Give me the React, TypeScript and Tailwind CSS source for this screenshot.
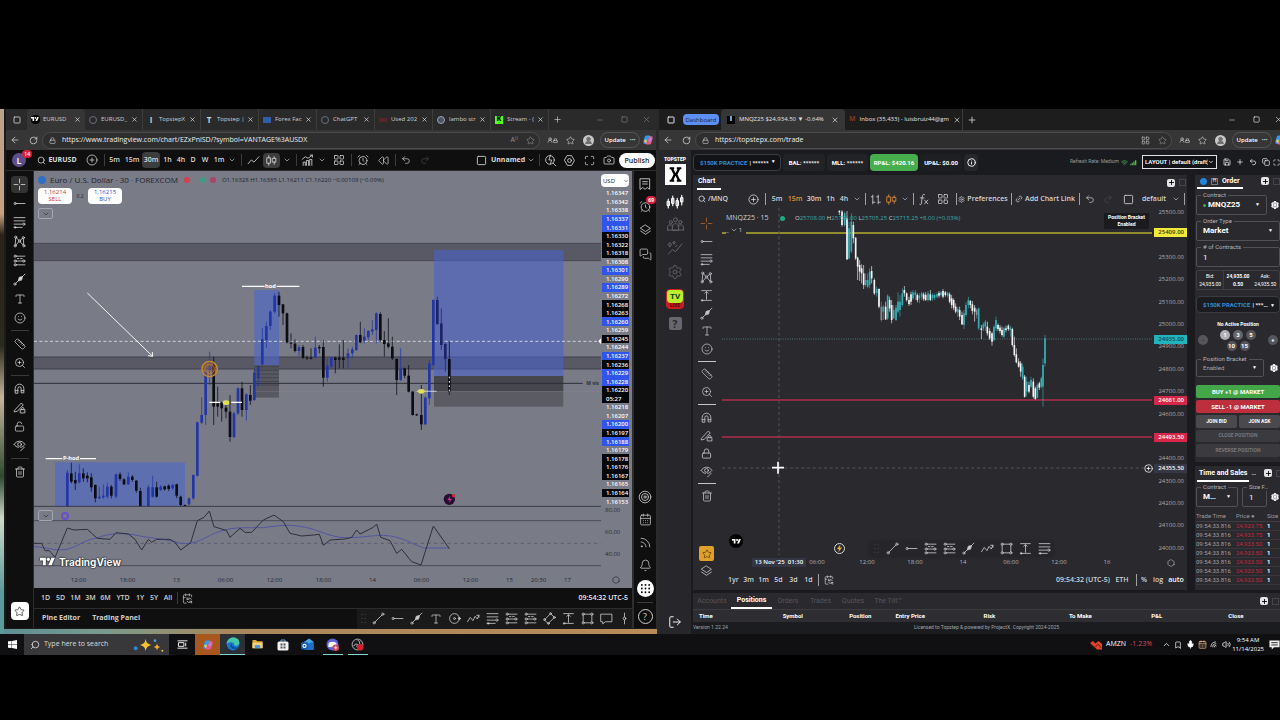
import React from "react";
import {
  AlarmClock, ArrowLeft, Bell, CalendarDays, Camera, ChevronDown, ChevronUp, CirclePlus, Copy, Hexagon,
  Link2, LogOut, Maximize, MessagesSquare, Mic, Minus, Plus, Redo2, Rewind, RotateCw,
  Rss, Ruler, Save, Search, Settings, SignalHigh, Smile, Square, Star, Target, Trash2, Type, Undo2,
  Volume2, Wifi, X, ZoomIn, Lock, LockOpen, Info, CalendarSync, Bookmark, Magnet, UserRound,
} from "lucide-react";

type Candle = [number, number, number, number, number, string];

/* x, high, top, bottom, low, colour key */
const EUR_A: Candle[] = [
  [202, 735, 743, 845, 845, "b"], [214, 713, 745, 770, 775, "k"], [226, 740, 765, 775, 795, "k"], [238, 718, 745, 772, 775, "b"],
  [250, 730, 745, 760, 770, "k"], [262, 742, 752, 760, 772, "k"], [274, 745, 757, 787, 800, "k"], [286, 778, 780, 820, 832, "k"],
  [298, 785, 815, 820, 822, "b"], [310, 778, 812, 817, 822, "b"], [322, 773, 785, 815, 820, "b"], [334, 780, 785, 812, 820, "k"],
  [348, 745, 748, 815, 820, "b"], [360, 742, 748, 762, 768, "k"], [372, 760, 763, 778, 780, "k"], [385, 742, 755, 778, 780, "b"],
  [397, 750, 755, 765, 770, "k"], [409, 765, 767, 797, 803, "k"], [421, 788, 798, 845, 845, "k"], [445, 780, 787, 845, 845, "b"],
  [458, 752, 787, 815, 818, "b"], [470, 770, 787, 815, 818, "k"], [482, 780, 785, 795, 798, "b"], [494, 782, 784, 793, 797, "k"],
  [506, 778, 782, 792, 798, "k"], [518, 776, 780, 790, 795, "b"], [530, 776, 778, 812, 820, "k"], [542, 812, 815, 840, 845, "k"],
  [555, 838, 840, 843, 845, "k"], [567, 818, 820, 838, 842, "b"], [580, 748, 750, 820, 825, "b"], [592, 590, 592, 752, 755, "b"],
  [605, 517, 570, 593, 597, "b"], [617, 430, 440, 570, 600, "b"], [629, 380, 425, 435, 480, "b"], [641, 395, 420, 545, 600, "k"],
  [653, 485, 535, 545, 575, "k"], [665, 530, 533, 550, 590, "k"], [678, 530, 548, 560, 580, "k"], [690, 510, 560, 636, 650, "k"],
  [702, 560, 565, 636, 640, "b"], [714, 487, 490, 565, 570, "b"], [726, 470, 490, 555, 575, "k"], [739, 505, 508, 555, 587, "b"],
  [751, 480, 510, 527, 540, "k"], [763, 430, 443, 525, 528, "b"], [775, 422, 424, 460, 485, "b"], [787, 310, 343, 418, 420, "b"],
  [799, 290, 303, 345, 368, "b"], [811, 255, 260, 303, 315, "b"], [824, 205, 212, 260, 265, "b"], [837, 200, 212, 240, 275, "k"],
  [849, 237, 238, 265, 300, "k"], [861, 263, 265, 352, 355, "k"], [873, 325, 353, 356, 370, "k"], [885, 343, 356, 378, 382, "k"],
  [897, 360, 367, 378, 392, "b"], [909, 360, 366, 398, 402, "k"], [921, 392, 397, 400, 405, "k"], [933, 370, 398, 401, 403, "k"],
  [946, 335, 368, 398, 400, "b"], [958, 360, 366, 370, 385, "k"], [970, 345, 366, 458, 485, "k"], [982, 400, 422, 458, 470, "b"],
  [994, 395, 397, 425, 430, "b"], [1006, 395, 398, 405, 445, "k"], [1018, 358, 398, 404, 430, "k"], [1030, 345, 398, 405, 430, "k"],
  [1044, 370, 385, 400, 430, "b"], [1057, 365, 373, 385, 400, "b"], [1069, 328, 330, 375, 378, "b"], [1081, 290, 330, 352, 355, "k"],
  [1093, 310, 335, 347, 355, "b"], [1105, 315, 318, 337, 345, "b"], [1117, 285, 313, 320, 330, "b"], [1129, 262, 265, 315, 355, "b"],
  [1141, 262, 267, 345, 350, "k"], [1153, 318, 345, 357, 395, "k"], [1165, 280, 355, 365, 370, "k"], [1177, 335, 365, 400, 405, "k"],
  [1190, 400, 402, 465, 510, "k"], [1202, 370, 430, 465, 468, "b"], [1214, 428, 430, 452, 460, "k"], [1226, 420, 452, 500, 502, "k"],
  [1238, 498, 500, 570, 572, "k"], [1250, 566, 568, 571, 573, "k"], [1264, 480, 570, 598, 615, "k"], [1276, 515, 518, 598, 600, "b"],
  [1288, 405, 415, 520, 540, "b"], [1300, 223, 225, 420, 425, "b"], [1312, 215, 225, 297, 300, "n"], [1324, 250, 295, 360, 375, "n"],
  [1336, 352, 357, 402, 440, "n"], [1348, 350, 402, 500, 510, "k"],
];

const NQ: Candle[] = [
  [58, 15, 18, 22, 30, "w"], [66, 15, 20, 60, 65, "w"], [74, 20, 25, 60, 65, "t"], [81, 18, 40, 163, 165, "w"], [87, 50, 70, 160, 163, "t"],
  [94, 25, 50, 140, 145, "t"], [100, 50, 60, 100, 115, "w"], [107, 97, 98, 160, 165, "w"], [113, 155, 158, 185, 225, "w"],
  [119, 165, 180, 200, 228, "w"], [125, 178, 190, 205, 235, "w"], [131, 180, 205, 240, 252, "w"], [137, 205, 225, 240, 245, "t"],
  [143, 205, 225, 245, 250, "t"], [149, 190, 200, 240, 250, "t"], [155, 183, 198, 220, 235, "w"], [163, 220, 225, 265, 270, "w"],
  [170, 245, 252, 265, 275, "t"], [177, 250, 252, 305, 310, "w"], [184, 290, 305, 345, 350, "g"], [190, 300, 305, 320, 345, "t"],
  [197, 290, 305, 343, 345, "w"], [203, 268, 272, 340, 345, "t"], [209, 275, 285, 310, 320, "w"], [215, 285, 300, 345, 355, "w"],
  [221, 300, 315, 340, 342, "t"], [228, 300, 308, 345, 348, "t"], [234, 262, 290, 320, 325, "t"], [240, 270, 290, 315, 335, "t"],
  [247, 250, 265, 300, 305, "t"], [253, 243, 255, 265, 275, "w"], [260, 262, 265, 285, 290, "w"], [267, 275, 285, 297, 303, "w"],
  [273, 260, 268, 290, 300, "w"], [279, 255, 262, 280, 285, "t"], [286, 255, 262, 270, 285, "t"], [292, 265, 270, 285, 292, "w"],
  [298, 265, 272, 280, 295, "t"], [305, 260, 265, 275, 285, "t"], [311, 262, 268, 282, 288, "w"], [317, 262, 270, 285, 288, "w"],
  [324, 258, 265, 285, 290, "t"], [331, 255, 268, 285, 288, "w"], [338, 265, 270, 280, 288, "t"], [344, 265, 270, 278, 285, "t"],
  [351, 262, 268, 275, 280, "t"], [357, 258, 264, 272, 278, "w"], [363, 258, 262, 270, 275, "t"], [369, 252, 258, 275, 280, "w"],
  [376, 258, 262, 270, 275, "w"], [383, 260, 264, 272, 278, "t"], [389, 262, 268, 290, 295, "w"], [395, 270, 280, 300, 310, "w"],
  [401, 280, 285, 308, 315, "w"], [407, 295, 305, 320, 325, "w"], [413, 305, 312, 322, 335, "t"], [419, 305, 315, 335, 345, "w"],
  [426, 320, 330, 358, 360, "w"], [432, 315, 325, 360, 372, "t"], [438, 292, 300, 330, 335, "t"], [445, 275, 285, 300, 310, "t"],
  [451, 285, 288, 300, 310, "w"], [457, 288, 298, 318, 328, "w"], [464, 300, 308, 320, 350, "w"], [470, 310, 315, 330, 340, "g"],
  [476, 308, 310, 370, 375, "t"], [484, 360, 370, 375, 402, "w"], [490, 352, 358, 370, 378, "t"], [496, 345, 350, 365, 378, "t"],
  [502, 350, 365, 385, 392, "w"], [509, 370, 378, 400, 405, "w"], [516, 380, 385, 410, 422, "w"], [522, 360, 365, 405, 410, "t"],
  [528, 335, 345, 370, 378, "t"], [534, 355, 360, 372, 378, "w"], [540, 360, 368, 378, 385, "w"], [546, 365, 375, 390, 395, "w"],
  [552, 365, 370, 395, 400, "t"], [558, 362, 370, 375, 382, "w"], [565, 358, 362, 372, 378, "w"], [571, 362, 368, 375, 395, "t"],
  [577, 368, 372, 420, 425, "w"], [583, 395, 420, 450, 455, "w"], [589, 430, 448, 472, 475, "w"], [596, 460, 470, 485, 488, "w"],
  [602, 468, 475, 500, 515, "w"], [608, 475, 485, 520, 525, "t"], [614, 510, 515, 575, 578, "w"], [620, 515, 530, 560, 575, "t"],
  [627, 530, 540, 560, 565, "w"], [633, 515, 525, 545, 550, "t"], [640, 520, 530, 575, 580, "w"], [646, 545, 550, 582, 584, "w"],
  [652, 535, 540, 578, 580, "t"], [658, 530, 535, 548, 555, "w"], [664, 515, 520, 545, 550, "t"], [669, 460, 480, 545, 605, "t"],
  [675, 390, 400, 475, 485, "t"],
];

const COLORS: Record<string, string> = { b: "#2336a6", k: "#0b0c14", n: "#1d2466", w: "#f1f3f4", t: "#35aeb5", g: "#8d8d90" };

function Candles({ data, w, wick }: { data: Candle[]; w: number; wick: number }) {
  return (
    <>
      {data.map(([x, hi, top, bot, lo, c]) => (
        <g key={x} fill={COLORS[c]}>
          <rect x={x - wick / 2} y={hi} width={wick} height={lo - hi} opacity="0.75" />
          <rect x={x - w / 2} y={top} width={w} height={Math.max(bot - top, 2)} />
        </g>
      ))}
    </>
  );
}

/* ---------- glyphs ---------- */
type GP = { s?: string; w?: number; children: React.ReactNode };
function G({ s = "size-[13px]", w = 1.5, children }: GP) {
  return (
    <svg viewBox="0 0 24 24" className={`${s} shrink-0`} fill="none" stroke="currentColor" strokeWidth={w} strokeLinecap="round" strokeLinejoin="round" aria-hidden="true">
      {children}
    </svg>
  );
}
const Cross = () => <G><path d="M12 2v7M12 15v7M2 12h7M15 12h7" /></G>;
const Trend = () => <G><circle cx="4" cy="20" r="2" /><circle cx="20" cy="4" r="2" /><path d="M5.5 18.500L18.500 5.500" /></G>;
const HRay = () => <G><circle cx="4" cy="12" r="2" /><path d="M6 12h16" /></G>;
const Fib = () => <G><path d="M2 3h20M2 9h20M2 15h15M2 21h15" /><circle cx="20" cy="15" r="2" /><circle cx="4" cy="21" r="1.500" /></G>;
const Pattern = () => <G><circle cx="4" cy="20" r="2" /><circle cx="5" cy="4" r="2" /><circle cx="12" cy="11" r="2" /><circle cx="19" cy="5" r="2" /><circle cx="20" cy="20" r="2" /><path d="M4 18L5 6M6.500 5.500L10.500 9.500M13.500 9.500L17.500 6.500M19.200 7l.6 11M18.500 18.500L13.300 12.500M5.500 18.500l5.200-6" /></G>;
const Position = () => <G><circle cx="4" cy="4" r="2" /><circle cx="4" cy="13" r="2" /><circle cx="20" cy="13" r="2" /><circle cx="4" cy="20" r="2" /><path d="M6 4h16M6 13h12M6 20h16M8 8.500h3M14 8.500h3" /></G>;
const Brush = () => <G><circle cx="3.500" cy="20.500" r="2" /><path d="M5 19l6-6M17 7l5-5" /><path d="M10 14l1.500-6 6-1.500L16 12.500z" fill="currentColor" /></G>;
const Zig = () => <G><path d="M1 18l5-8 5 6 4-8 4 5 3-7M18 6h4v4" /></G>;
const TextRange = () => <G><path d="M3 3h18M3 21h18M12 5v14M9 8l3-3 3 3" /><circle cx="4" cy="21" r="1.500" /></G>;
const RectTool = () => <G><path d="M6 4h12M6 20h12M4 6v12M20 6v12" /><circle cx="4" cy="4" r="2" /><circle cx="20" cy="4" r="2" /><circle cx="4" cy="20" r="2" /><circle cx="20" cy="20" r="2" /></G>;
const Rotated = () => <G><path d="M3 14L14 3l7 7-11 11z" /><circle cx="14" cy="3" r="1.800" /><circle cx="3" cy="14" r="1.800" /><circle cx="10" cy="21" r="1.800" /><circle cx="21" cy="10" r="1.800" /></G>;
const CircleTool = () => <G><circle cx="12" cy="12" r="9" /><circle cx="12" cy="12" r="1.800" /><circle cx="21" cy="12" r="1.800" fill="currentColor" /></G>;
const Callout = () => <G><path d="M2 4h20v14H10l-5 4v-4H2z" /></G>;
const VLine = () => <G><path d="M12 2v7M12 15v7" /><circle cx="12" cy="12" r="2.500" /></G>;
const MagnetI = () => <G><path d="M4 20v-8a8 8 0 0116 0v8h-5v-8a3 3 0 00-6 0v8zM4 16h5M15 16h5" /></G>;
const PencilLock = () => <G><path d="M3 17L15 4l4 3L8 19l-5 1zM14 16h8v6h-8zM16 16v-2a2 2 0 014 0v2" /></G>;
const EyePen = () => <G><path d="M2 10c5-8 15-8 20 0-2 3-5 5-8 5.500M2 10c2 3 5 5 8 5.500" /><circle cx="12" cy="10" r="3.500" /><path d="M14 22l7-7" /></G>;
const CandlesI = () => <G><path d="M7 3v4M7 17v4M4 7h6v10H4zM17 5v3M17 15v4M14 8h6v7h-6z" /></G>;
const BarsI = () => <G><path d="M7 4v16M7 7H4M7 17h4M17 4v16M17 7h-3M17 17h4" /></G>;
const Indicators = () => <G><path d="M4 21v-6h4v6M10 21v-9h4v9M16 21V10h4v11M2 10l6-5 5 3 8-6M17 2h4v4" /></G>;
const GridI = ({ s = "size-3" }: { s?: string }) => <G s={s}><rect x="3" y="3" width="7" height="7" rx="1" /><rect x="14" y="3" width="7" height="7" rx="1" /><rect x="3" y="14" width="7" height="7" rx="1" /><rect x="14" y="14" width="7" height="7" rx="1" /></G>;
const Quick = () => <G><circle cx="11" cy="11" r="8" /><path d="M17 17l5 5M12 2l-3 9h5l-2 7" /></G>;
const HexI = () => <G><path d="M8 3h8l5 9-5 9H8l-5-9z" /><circle cx="12" cy="12" r="3.500" /></G>;
const LayersI = () => <G><path d="M12 2l9 6-9 6-9-6zM3 13l9 6 9-6" /></G>;
const People = () => <G s="size-[19px]" w={1.2}><circle cx="12" cy="6" r="2.500" /><circle cx="6" cy="9" r="2" /><circle cx="18" cy="9" r="2" /><path d="M2 19v-4c0-3 6-3.500 7-1M22 19v-4c0-3-6-3.500-7-1M8 19v-5c0-4 8-4 8 0v5zM2 19h20" /></G>;
const Sparks = () => <G s="size-[17px]" w={1.3}><path d="M2 21l6-6 4 3 9-11M12 11l2-2M4 11l1-2 2-1-2-1-1-2-1 2-2 1 2 1zM10 7l.700-1.500L12 5l-1.300-.6L10 3l-.7 1.400L8 5l1.300.5z" /></G>;
const Drag = () => (
  <G><path d="M9 5v.1M15 5v.1M9 12v.1M15 12v.1M9 19v.1M15 19v.1" /></G>
);
const MultiCandle = () => <G s="size-[18px]"><path d="M3 8v12M9 4v13M15 7v13M21 3v13" /><rect x="1.500" y="11" width="3" height="6" rx="1" /><rect x="7.500" y="7" width="3" height="7" rx="1" /><rect x="13.500" y="10" width="3" height="7" rx="1" /><rect x="19.500" y="6" width="3" height="6" rx="1" /></G>;
const TvMark = ({ s }: { s: string }) => (
  <svg viewBox="0 0 36 28" className={s} fill="currentColor" aria-hidden="true">
    <path d="M14 22H7V11H0V4h14zM28 22h-8l7.500-18h8z" /><circle cx="20" cy="8" r="4" />
  </svg>
);
const Copilot = () => (
  <svg viewBox="0 0 24 24" className="size-[12px] shrink-0" aria-hidden="true">
    <path d="M9 3h6c2 0 2.500 2 3 4l-4 1-5 12H7c-4 0-5-2-4-6l2-7c.7-2.500 1.500-4 4-4z" fill="#2f9be8" />
    <path d="M15 21H9c-2 0-2.500-2-3-4l4-1 5-12h2c4 0 5 2 4 6l-2 7c-.7 2.500-1.500 4-4 4z" fill="#e25b8b" />
    <path d="M14 8h5l1 2-3 5-4-1z" fill="#c77be8" /><path d="M4 12l5-1 1 5-4 2z" fill="#f1c24a" />
  </svg>
);
const EdgeI = () => (
  <svg viewBox="0 0 24 24" className="size-[14px]" aria-hidden="true">
    <circle cx="12" cy="12" r="11" fill="#1778d2" />
    <path d="M1 12C2 4 8 1 13 1c6 0 10 4 10 9 0 3-3 5-6 5-2 0-3-1-3-2 0-3-3-4-5-4-4 0-7 1-8 3z" fill="#46c8a8" />
    <path d="M9 10c-3 3-2 10 5 11 3 .5 6-1 8-4-4 2-13 1-13-7z" fill="#0d4f9a" />
  </svg>
);

type CellP = { w: string; children?: React.ReactNode; label?: string; className?: string };
function Btn({ w, children, label, className = "" }: CellP) {
  return (
    <button type="button" aria-label={label} className={`flex h-full shrink-0 items-center justify-center whitespace-nowrap ${w} ${className}`}>
      {children}
    </button>
  );
}
function Sep({ w, c = "bg-[#3c3c3c]" }: { w: string; c?: string }) {
  return <span className={`flex h-full shrink-0 items-center justify-center ${w}`}><span className={`h-3 w-px ${c}`} /></span>;
}
const Chev = () => <ChevronDown size={8} strokeWidth={1.8} />;

const lucide = { size: 12, strokeWidth: 1.5 };

/* ---------- left browser ---------- */
const LEFT_TABS = [
  { t: "EURUSD", i: <span className="flex size-[9px] items-center justify-center rounded-sm bg-black text-white"><TvMark s="w-2" /></span>, a: true },
  { t: "EURUSD_", i: <span className="size-2 rounded-full border border-gray-500" /> },
  { t: "TopstepX", i: <span className="text-[8px] font-bold">I</span> },
  { t: "Topstep |", i: <span className="text-[8px] font-bold">T</span> },
  { t: "Forex Fac", i: <span className="h-1.5 w-2 bg-[#2f5fa8]" /> },
  { t: "ChatGPT", i: <span className="size-2 rounded-full border border-gray-500" /> },
  { t: "Used 202", i: <span className="h-1 w-2 bg-[#5b2327]" /> },
  { t: "lambo str", i: <span className="size-2 rounded-full border border-gray-400 bg-gray-600" /> },
  { t: "Stream - (", i: <span className="flex size-2 items-center justify-center bg-[#53fc18] text-[7px] font-black text-black">K</span> },
];

function WindowControls() {
  return (
    <div className="flex h-full items-center">
      <Btn w="w-6" label="Minimize"><Minus size={8} strokeWidth={1.5} /></Btn>
      <Btn w="w-6" label="Maximize"><Square size={7} strokeWidth={2} /></Btn>
      <Btn w="w-5" label="Close window"><X size={9} strokeWidth={1.5} /></Btn>
    </div>
  );
}

function AddressBar({ url, extra }: { url: string; extra?: boolean }) {
  return (
    <div className={`flex h-5 shrink-0 items-center bg-[#363637] text-[#d6d6d6] ${extra ? "-mr-2" : ""}`}>
      <Btn w="w-[18px]" label="Back"><ArrowLeft size={10} strokeWidth={1.8} /></Btn>
      <Btn w="w-[18px]" label="Reload"><RotateCw size={9} strokeWidth={2} /></Btn>
      <label className="flex h-[17px] min-w-0 flex-1 items-center gap-1 rounded-full border border-[#4b4b4c] bg-[#2e2e2f] pr-1 pl-1.5">
        <Lock size={7} strokeWidth={2} />
        <input aria-label="Address" className="ml-0.5 min-w-0 flex-1 bg-transparent text-[7px] text-[#ececec] outline-none" defaultValue={url} />
        {extra ? <GridI s="size-[9px]" /> : <span className="text-[7px] text-[#8e8e8e]">A⁾⁾</span>}
        <Star size={9} strokeWidth={1.5} className="ml-1 text-[#9a9a9a]" />
      </label>
      <Btn w="w-6" label="Extensions"><span className="flex items-end"><UserRound size={6} strokeWidth={2.5} /><Lock size={5} strokeWidth={3} /></span></Btn>
      <Btn w="w-3" label="Favorites"><Star size={9} strokeWidth={1.6} /></Btn>
      <Btn w="w-6" label="Profile"><span className="flex size-[11px] items-center justify-center rounded-full bg-[#c9c9c9] text-[#6f6f6f]"><UserRound size={9} strokeWidth={2} fill="currentColor" /></span></Btn>
      <button type="button" className="flex h-4 w-10 shrink-0 items-center justify-center gap-1 rounded-full border border-[#555] text-[6px] font-semibold whitespace-nowrap text-white">Update <span className="text-[7px]">···</span></button>
      <Btn w="w-4" label="Copilot"><Copilot /></Btn>
    </div>
  );
}

function LeftTabs() {
  return (
    <div className="flex h-[21px] shrink-0 items-center overflow-hidden bg-[#2a2a2b] text-[6px] text-[#cfcfcf]">
      <Btn w="w-[21px]" label="Tab actions"><Square size={8} strokeWidth={2.5} /></Btn>
      {LEFT_TABS.map((t) => (
        <div key={t.t} className={`flex h-full w-[58px] shrink-0 items-center pr-1 pl-0.5 ${t.a ? "rounded-t bg-[#363637]" : "border-r border-[#3c3c3c]"}`}>
          <span className="flex w-[12px] shrink-0 justify-center">{t.i}</span>
          <span className="ml-0.5 flex-1 whitespace-nowrap">{t.t}</span>
          <button type="button" aria-label={`Close ${t.t}`} className="text-white"><X size={7} strokeWidth={2} /></button>
        </div>
      ))}
      <Btn w="w-4" label="New tab"><Plus size={9} strokeWidth={1.8} /></Btn>
      <div className="flex-1" />
      <div className="h-full text-[#8a8a8a]"><WindowControls /></div>
    </div>
  );
}

function LeftTopBar() {
  return (
    <div className="flex h-[21px] shrink-0 items-center border-b border-[#2d2d2d] bg-[#0f0f0f] text-[7px] font-semibold text-[#dadada]">
      <button type="button" aria-label="Account" className="relative flex h-full w-[26px] shrink-0 items-center justify-center">
        <span className="flex size-[14px] items-center justify-center rounded-full bg-[#5d4f8c] text-[9px] leading-none text-white">L</span>
        <span className="absolute top-0 right-0 rounded-full bg-[#d81f3c] px-0.5 text-[5px] leading-2 text-white">14</span>
      </button>
      <Btn w="w-[50px]" className="gap-0.5 font-bold"><Search size={9} strokeWidth={2} />EURUSD</Btn>
      <Btn w="w-5" label="Compare"><CirclePlus {...lucide} /></Btn>
      <Sep w="w-[5px]" />
      <Btn w="w-[15px]">5m</Btn>
      <Btn w="w-5">15m</Btn>
      <Btn w="w-[18px]"><span className="w-full rounded-sm bg-[#3d3d3d] py-1 leading-2">30m</span></Btn>
      <Btn w="w-[15px]">1h</Btn>
      <Btn w="w-3">4h</Btn>
      <Btn w="w-3">D</Btn>
      <Btn w="w-3">W</Btn>
      <Btn w="w-4">1m</Btn>
      <Btn w="w-2.5" label="Intervals"><Chev /></Btn>
      <Sep w="w-2" />
      <Btn w="w-4" label="Line"><G><path d="M2 18l6-7 5 4 9-10" /></G></Btn>
      <Btn w="w-5" label="Candles"><span className="rounded-sm bg-[#3d3d3d] px-0.5 py-px"><CandlesI /></span></Btn>
      <Btn w="w-3" label="Chart types"><Chev /></Btn>
      <Sep w="w-1.5" />
      <Btn w="w-4" label="Indicators"><Indicators /></Btn>
      <Btn w="w-3.5" label="More indicators"><Chev /></Btn>
      <Btn w="w-5" label="Templates"><GridI /></Btn>
      <Sep w="w-1" />
      <Btn w="w-5" label="Alert"><AlarmClock {...lucide} /></Btn>
      <Btn w="w-5" label="Replay"><Rewind size={11} strokeWidth={1.5} /></Btn>
      <Sep w="w-1" />
      <Btn w="w-[18px]" label="Undo"><Undo2 size={10} strokeWidth={1.6} /></Btn>
      <Btn w="w-5" label="Redo" className="text-[#4a4a4a]"><Redo2 size={10} strokeWidth={1.6} /></Btn>
      <div className="flex-1" />
      <Btn w="w-5" label="Layout"><Square size={11} strokeWidth={1.8} /></Btn>
      <Btn w="w-[34px]" className="font-bold">Unnamed</Btn>
      <Btn w="w-3" label="Layouts"><Chev /></Btn>
      <Sep w="w-1" />
      <Btn w="w-[18px]" label="Quick search"><Quick /></Btn>
      <Btn w="w-5" label="Settings"><HexI /></Btn>
      <Btn w="w-5" label="Full screen"><Maximize size={11} strokeWidth={1.6} /></Btn>
      <Btn w="w-5" label="Snapshot"><Camera {...lucide} /></Btn>
      <button type="button" className="mr-px h-[15px] w-[36px] shrink-0 rounded-full bg-white text-[7px] leading-none font-semibold text-[#1c1c1c]">Publish</button>
    </div>
  );
}

function ToolColumn({ items, item, sep, line }: { items: (React.ReactNode | null)[]; item: string; sep: string; line: string }) {
  return (
    <>
      {items.map((n, i) =>
        n === null ? (
          <span key={i} className={`flex w-full shrink-0 items-center justify-center ${sep}`}><span className={`h-px w-[18px] ${line}`} /></span>
        ) : (
          <button key={i} type="button" aria-label="Drawing tool" className={`flex w-full shrink-0 items-center justify-center ${item}`}>{n}</button>
        )
      )}
    </>
  );
}

const LABELS: [string, string][] = [
  ["1.16347", ""], ["1.16342", ""], ["1.16338", ""], ["1.16337", "b"], ["1.16331", "b"], ["1.16330", "k"], ["1.16322", "k"], ["1.16318", "k"],
  ["1.16308", ""], ["1.16301", "b"], ["1.16290", ""], ["1.16289", "b"], ["1.16272", ""], ["1.16268", "k"], ["1.16263", "k"], ["1.16260", "b"],
  ["1.16259", ""], ["1.16245", "k"], ["1.16244", ""], ["1.16237", "b"], ["1.16236", "k"], ["1.16229", "b"], ["1.16228", "b"], ["1.16220", "k"],
  ["05:27", "k"], ["1.16218", ""], ["1.16207", ""], ["1.16200", "b"], ["1.16197", "k"], ["1.16188", "b"], ["1.16179", ""], ["1.16178", "k"],
  ["1.16176", "k"], ["1.16167", "k"], ["1.16165", ""], ["1.16164", "k"], ["1.16153", ""],
];
const LABEL_BG: Record<string, string> = { "": "", b: "bg-[#2f55ea]", k: "bg-[#05060a]" };

function EurChart() {
  return (
    <div className="relative min-w-0 flex-1">
      <svg viewBox="0 0 1701 1203" preserveAspectRatio="none" className="block h-[401px] w-full" role="img" aria-label="EURUSD 30 minute chart">
        <g transform="translate(-102 162)">
          <rect x="102" y="55" width="1701" height="52" fill="#595965" />
          <path d="M102 55H1803M102 107H1803" stroke="#484854" strokeWidth="3" />
          <rect x="102" y="396" width="1701" height="36" fill="#595965" />
          <path d="M102 396H1803M102 432H1803" stroke="#40404c" strokeWidth="3" />
          <rect x="165" y="712" width="390" height="133" fill="#4e67c8" opacity="0.62" />
          <rect x="763" y="195" width="74" height="226" fill="#4e67c8" opacity="0.65" />
          <rect x="763" y="421" width="74" height="97" fill="#50505a" opacity="0.8" />
          <path d="M763 425h74M763 436h74M763 447h74M763 458h74M763 469h74M763 480h74" stroke="#3c3c46" strokeWidth="2" />
          <rect x="1302" y="75" width="388" height="378" fill="#4a62c8" opacity="0.6" />
          <rect x="1302" y="453" width="388" height="45" fill="#46464d" />
          <rect x="1302" y="498" width="388" height="47" fill="#5b5b64" />
          <path d="M102 475H1748" stroke="#2c2d38" strokeWidth="3" />
          <path d="M640 499H1803" stroke="#94868f" strokeWidth="2" opacity="0.5" />
          <path d="M102 349H1803" stroke="#cfcfd8" strokeWidth="3" strokeDasharray="9 7" />
          <Candles data={EUR_A} w={8} wick={3} />
          <path d="M1348 455V500" stroke="#fff" strokeWidth="3" strokeDasharray="5 8" />
          <path d="M262 204L458 394M444 392l14 2-1-13" stroke="#f4f4f6" strokeWidth="3" fill="none" />
          <g stroke="#fff" strokeWidth="4">
            <path d="M726 184h68M830 184h68M137 701h50M240 701h48M628 532h32M694 532h32" />
            <path d="M1250 499h60" opacity="0.5" />
          </g>
          <g fill="#fff" fontSize="17" fontWeight="700" textAnchor="middle">
            <text x="811" y="190">hod</text>
            <text x="213" y="706">P-hod</text>
            <text x="1778" y="481" fill="#30313c" fontSize="15">M vis</text>
          </g>
          <ellipse cx="678" cy="533" rx="10" ry="7" fill="#dede58" />
          <ellipse cx="1264" cy="499" rx="10" ry="7" fill="#dede58" />
          <circle cx="629" cy="432" r="23" fill="#b0643c" fillOpacity="0.4" stroke="#c98a2a" strokeWidth="4" />
          <circle cx="629" cy="432" r="14" fill="none" stroke="#c98a2a" strokeWidth="2" />
          <circle cx="1348" cy="823" r="17" fill="#2b0d33" />
          <path d="M1351 812l-9 13h7l-2 9 9-13h-7z" fill="#c03a8a" />
          <circle cx="1361" cy="812" r="5" fill="#d22a3c" />
          <path d="M1803 340l-8 9 8 9z" fill="#fff" />
        </g>
        <g transform="translate(-102 987)" fill="none">
          <path d="M102 19H1803" stroke="#3b3c49" strokeWidth="3" />
          <path d="M102 62H1803M102 197H1803" stroke="#4b4c58" strokeWidth="3" />
          <path d="M102 130H1803" stroke="#5c5d70" strokeWidth="3" strokeDasharray="10 10" />
          <path d="M102 140C140 142 160 152 195 149C230 144 250 120 290 114C330 98 380 98 420 108C460 116 500 116 540 130C590 138 620 106 660 94C700 80 740 84 790 83C830 78 860 72 900 79C950 86 970 104 1020 112C1070 116 1110 106 1150 106C1200 108 1230 128 1270 144H1348" stroke="#5257a0" strokeWidth="3" />
          <path d="M102 130L125 130 135 152 148 152 165 172 185 125 202 84 222 90 262 88 292 115 330 118 348 98 385 102 405 118 425 150 445 118 455 127 470 118 510 118 525 127 542 150 572 128 592 62 612 52 628 33 642 80 680 92 690 112 720 85 735 97 755 97 790 60 822 45 850 65 870 100 905 108 940 105 958 103 970 136 990 120 1035 117 1055 112 1070 90 1080 102 1120 82 1130 72 1142 112 1170 122 1190 160 1205 148 1235 185 1263 195 1300 78 1348 146" stroke="#2f303c" strokeWidth="3" />
        </g>
      </svg>
      <div className="absolute inset-x-0 top-0 px-1 pt-[3px] text-[#23252f]">
        <div className="flex h-3 items-center gap-1 whitespace-nowrap">
          <span className="size-2 rounded-sm bg-[#2f6fc4]" />
          <span className="text-[8px]">Euro / U.S. Dollar · 30 · FOREXCOM</span>
          <span className="ml-0.5 size-1.5 rounded-full bg-[#d4404c]" />
          <span className="ml-1.5 size-1.5 rounded-full bg-[#3f9c84]" />
          <span className="size-1.5 rounded-full bg-[#a8446a]" />
          <span className="ml-0.5 text-[6px]">O1.16328 H1.16385 L1.16211 C1.16220 −0.00109 (−0.09%)</span>
        </div>
        <div className="mt-0.5 flex items-center text-center text-[6px] leading-[7px]">
          <button type="button" className="w-[34px] rounded-sm bg-white py-px text-[#c8324a]">1.16214<br />SELL</button>
          <span className="w-4 text-[5px]">0.2</span>
          <button type="button" className="w-[34px] rounded-sm bg-white py-px text-[#2f4fd0]">1.16215<br />BUY</button>
        </div>
        <button type="button" aria-label="Collapse legend" className="mt-1 flex h-[11px] w-[15px] items-center justify-center rounded-xs border border-[#a5a7b0]"><Chev /></button>
      </div>
      <div className="absolute top-[339px] left-1 flex items-center gap-2">
        <button type="button" aria-label="Collapse pane" className="flex h-[11px] w-[15px] items-center justify-center rounded-xs border border-[#a5a7b0] text-[#23252f]"><Chev /></button>
        <span className="size-2 rounded-full border-2 border-[#6a50c8]" />
      </div>
      <div className="absolute top-[383px] left-[6px] flex items-center gap-1 text-white [text-shadow:0_0_2px_#000,0_0_1px_#000]">
        <TvMark s="w-[15px] drop-shadow-[0_0_1px_#000]" />
        <span className="[font-family:Inter,sans-serif] text-[10px] leading-4 font-bold">TradingView</span>
      </div>
    </div>
  );
}

function LeftWindow() {
  return (
    <section className="mb-[5px] flex min-w-0 flex-col border-r border-b border-l-2 border-[#1b1b1b] border-r-[#2a2a2a] bg-[#2d2d2d]">
      <LeftTabs />
      <AddressBar url="https://www.tradingview.com/chart/EZxPnlSD/?symbol=VANTAGE%3AUSDX" />
      <LeftTopBar />
      <div className="flex flex-1">
        <aside className="flex w-[27px] shrink-0 flex-col items-center bg-[#0f0f0f] pt-1 text-[#d6d6d6]">
          <ToolColumn
            item="h-[19px]" sep="h-[7px]" line="bg-[#3a3a3a]"
            items={[
              <span className="flex size-[17px] items-center justify-center rounded-sm bg-[#333]"><Cross /></span>, <HRay />, <Fib />, <Pattern />, <Position />, <Brush />, <Type {...lucide} />, <Smile {...lucide} />, null,
              <Ruler {...lucide} />, <ZoomIn {...lucide} />, null, <MagnetI />, <PencilLock />, <LockOpen size={11} strokeWidth={1.6} />, <EyePen />, null, <Trash2 {...lucide} />,
            ]}
          />
          <div className="flex-1" />
          <button type="button" aria-label="Favorites" className="mb-2 flex size-[18px] items-center justify-center rounded-sm bg-white text-[#222]"><Star size={11} strokeWidth={1.5} /></button>
        </aside>
        <div className="flex min-w-0 flex-1 flex-col pl-px">
          <div className="bg-[#797b87]">
            <div className="flex">
              <EurChart />
              <div className="flex w-[31px] shrink-0 flex-col pr-[3px] text-[6px] text-white">
                <div className="mt-[3px] flex h-[13px] items-center rounded-sm bg-white pl-0.5 text-[#222]">
                  <select aria-label="Currency" className="w-full appearance-none bg-transparent text-[6px] leading-none"><option>USD</option></select>
                  <ChevronDown size={6} strokeWidth={2} />
                </div>
                <div className="mt-[2px] flex h-[317px] flex-col pl-px">
                  {LABELS.map(([t, c]) => (
                    <span key={t} className={`flex flex-1 items-center pl-1 leading-none font-semibold ${LABEL_BG[c]}`}>{t}</span>
                  ))}
                </div>
                <div className="flex flex-1 flex-col justify-between pb-[14px] pl-1 text-[6px] leading-[8px] text-[#2b2d38]">
                  <span>80.00</span><span>60.00</span><span>40.00</span>
                </div>
              </div>
            </div>
            <div className="flex h-4 items-center pl-5 text-center text-[6px] text-[#262833]">
              {["12:00", "18:00", "13", "06:00", "12:00", "18:00", "14", "06:00", "12:00"].map((t, i) => (
                <span key={i} className="w-[49px] shrink-0">{t}</span>
              ))}
              {["15", "20:30", "17"].map((t) => <span key={t} className="w-[29px] shrink-0">{t}</span>)}
              <span className="flex flex-1 justify-end pr-3"><Hexagon size={8} strokeWidth={2} /></span>
            </div>
          </div>
          <div className="flex h-5 items-center bg-[#0f0f0f] pr-1 pl-1 text-[7px] font-semibold text-[#cfcfcf]">
            {["1D", "5D", "1M", "3M", "6M"].map((t) => <Btn key={t} w="w-[15px]">{t}</Btn>)}
            <Btn w="w-5">YTD</Btn>
            {["1Y", "5Y", "All"].map((t) => <Btn key={t} w="w-[14px]">{t}</Btn>)}
            <Sep w="w-1" />
            <Btn w="w-4" label="Go to date"><CalendarSync size={11} strokeWidth={1.5} /></Btn>
            <div className="flex-1" />
            <span className="text-[#ececec]">09:54:32 UTC-5</span>
          </div>
          <div className="mt-px flex h-[19px] items-center bg-[#0f0f0f] pl-2 text-[7px] font-bold text-[#d0d0d0]">
            <button type="button" className="mr-3">Pine Editor</button>
            <button type="button">Trading Panel</button>
            <div className="flex-1" />
            <div className="flex h-full items-center bg-[#1a1a1a] text-[#cacaca]">
              <Btn w="w-3" label="Move" className="text-[#666]"><Drag /></Btn>
              {[<Trend />, <HRay />, <Brush />, <Type {...lucide} />, <CircleTool />, <Zig />, <Fib />, <Position />, <Position />, <Rotated />, <TextRange />, <RectTool />, <Callout />].map((n, i) => (
                <Btn key={i} w="w-[19px]" label="Drawing tool">{n}</Btn>
              ))}
              <Btn w="w-4" label="Drawing tool"><VLine /></Btn>
            </div>
          </div>
        </div>
        <aside className="ml-0.5 flex w-[22px] shrink-0 flex-col items-center bg-[#0f0f0f] pt-0.5 text-[#d0d0d0]">
          <Btn w="w-full" label="Watchlist" className="max-h-[21px]"><G s="size-[14px]"><path d="M4 3h16v18l-4-3-4 3-4-3-4 3zM8 8h8M8 12h8" /></G></Btn>
          <button type="button" aria-label="Alerts" className="relative flex h-6 w-full shrink-0 items-center justify-center"><AlarmClock size={13} strokeWidth={1.5} /><span className="absolute top-0.5 right-0 rounded-full bg-[#d81f3c] px-0.5 text-[5px] leading-2 font-bold text-white">69</span></button>
          <Btn w="w-full" label="Object tree" className="max-h-6"><LayersI /></Btn>
          <Btn w="w-full" label="Chats" className="max-h-6"><MessagesSquare size={13} strokeWidth={1.4} /></Btn>
          <div className="flex-1" />
          {[<Target size={14} strokeWidth={1.4} />, <CalendarDays size={13} strokeWidth={1.4} />, <Rss size={13} strokeWidth={1.4} />, <Bell size={13} strokeWidth={1.4} />,
            <span className="flex size-[17px] items-center justify-center rounded-full bg-white text-black"><G s="size-[11px]" w={4}><path d="M4 4v.1M12 4v.1M20 4v.1M4 12v.1M12 12v.1M20 12v.1M4 20v.1M12 20v.1M20 20v.1" /></G></span>].map((n, i) => (
            <button key={i} type="button" aria-label="Panel" className="flex h-[23px] w-full shrink-0 items-center justify-center">{n}</button>
          ))}
          <span className="my-0.5 h-px w-4 shrink-0 bg-[#3a3a3a]" />
          <button type="button" aria-label="Help" className="my-1 flex size-[15px] shrink-0 items-center justify-center rounded-full border border-[#d0d0d0] text-[9px] leading-none">?</button>
        </aside>
      </div>
    </section>
  );
}

/* ---------- right browser ---------- */
const roboto = "[font-family:Roboto,sans-serif]";

function RightTabs() {
  return (
    <div className="flex h-[21px] shrink-0 items-center overflow-hidden bg-[#1d1d1e] text-[#e4e4e4]">
      <Btn w="w-6" label="Tab actions"><Square size={8} strokeWidth={3} /></Btn>
      <button type="button" className="h-[11px] w-[36px] shrink-0 rounded-sm bg-[#5c8ff0] text-[6px] leading-none text-[#14264c]">Dashboard</button>
      <div className="ml-0.5 flex h-full w-[124px] shrink-0 items-center gap-1 rounded-t bg-[#363637] px-1.5">
        <span className="flex size-2 items-center justify-center bg-black text-[7px] font-bold text-white">I</span>
        <span className="flex-1 text-[6px] whitespace-nowrap">MNQZ25 $24,934.50 ▼ -0.64%</span>
        <button type="button" aria-label="Close MNQZ25"><X size={8} strokeWidth={2} /></button>
      </div>
      <div className="flex h-full w-[118px] shrink-0 items-center gap-1 border-r border-[#3c3c3c] px-1">
        <span className="w-2 text-[7px] font-bold text-[#7d3a20]">M</span>
        <span className="flex-1 text-[6px] whitespace-nowrap">Inbox (35,433) - luisbruiz44@gm</span>
        <button type="button" aria-label="Close Inbox"><X size={8} strokeWidth={2} /></button>
      </div>
      <Btn w="w-[18px]" label="New tab"><Plus size={10} strokeWidth={1.8} /></Btn>
      <div className="flex-1" />
      <div className="-mr-2 h-full text-white"><WindowControls /></div>
    </div>
  );
}

function Tile({ children, className }: { children: React.ReactNode; className: string }) {
  return <span className={`flex h-[17px] shrink-0 items-center justify-center rounded-sm text-[6px] font-bold whitespace-nowrap ${className}`}>{children}</span>;
}
const AddBox = () => (
  <span className="flex shrink-0 items-center gap-1">
    <button type="button" aria-label="Add tab" className="flex size-2 items-center justify-center rounded-xs bg-[#e4e4e4] text-black"><Plus size={7} strokeWidth={3} /></button>
    <span className="size-[7px] border border-[#45454a]" />
  </span>
);

function AppHeader() {
  return (
    <div className={`flex h-[22px] shrink-0 items-center gap-0.5 overflow-hidden bg-[#191b1f] pt-0.5 text-white ${roboto}`}>
      <button type="button" aria-haspopup="listbox" className="flex h-[17px] w-[88px] shrink-0 items-center gap-0.5 rounded-sm border border-[#3a3c42] bg-[#111317] px-1.5 text-[6px] font-bold whitespace-nowrap">
        <span className="text-[#2f8fd8]">$150K PRACTICE</span><span>| ******</span><span className="ml-auto text-[5px]">▼</span>
      </button>
      <Tile className="w-[42px] bg-[#222327]">BAL: ******</Tile>
      <Tile className="w-[41px] bg-[#222327]">MLL: ******</Tile>
      <Tile className="w-[48px] bg-[#46ae4c]">RP&amp;L: $420.16</Tile>
      <Tile className="w-[42px] bg-[#1e1f23]">UP&amp;L: $0.00</Tile>
      <Tile className="w-[14px] bg-[#26272b]"><Info size={9} strokeWidth={2.5} /></Tile>
      <div className="flex-1" />
      <span className="text-[5px] whitespace-nowrap text-[#9a9a9e]">Refresh Rate: Medium</span>
      <Wifi size={7} strokeWidth={3} className="shrink-0 text-[#3c8a4a]" />
      <SignalHigh size={8} strokeWidth={4} className="shrink-0 text-[#4fb45a]" />
      <div className="mx-0.5 flex h-[14px] w-[75px] shrink-0 items-center border border-[#e0e0e0] bg-[#111317] px-0.5">
        <select aria-label="Layout" className="min-w-0 flex-1 appearance-none bg-transparent text-[6px] leading-none font-semibold"><option>LAYOUT | default (draft)</option></select>
        <ChevronDown size={6} strokeWidth={3} className="shrink-0" />
      </div>
      {[<Save size={8} />, <Plus size={8} />, <Undo2 size={8} />, <Copy size={8} />].map((n, i) => (
        <button key={i} type="button" aria-label="Layout action" className="flex w-[11px] shrink-0 items-center justify-center">{n}</button>
      ))}
      <button type="button" aria-label="Expand" className="shrink-0"><Maximize size={7} /></button>
    </div>
  );
}

function NqToolbar() {
  const s = "bg-[#a0a0a4]";
  return (
    <div className="flex h-[18px] items-center overflow-hidden text-[7px] font-semibold text-[#d4d4d8]">
      <Btn w="w-9" className="gap-0.5 pl-1"><Search size={8} strokeWidth={2.5} />/MNQ</Btn>
      <span className="w-[14px] shrink-0" />
      <Btn w="w-5" label="Compare"><CirclePlus size={11} strokeWidth={1.8} /></Btn>
      <Sep w="w-[5px]" c={s} />
      <Btn w="w-[18px]">5m</Btn>
      <Btn w="w-[18px]" className="text-[#e8923a]">15m</Btn>
      <Btn w="w-5">30m</Btn>
      <Btn w="w-[13px]">1h</Btn>
      <Btn w="w-[14px]">4h</Btn>
      <Btn w="w-3" label="Intervals"><Chev /></Btn>
      <Sep w="w-1" c={s} />
      <Btn w="w-[17px]" label="Bars"><BarsI /></Btn>
      <Btn w="w-[15px]" label="Candles" className="text-[#e8923a]"><CandlesI /></Btn>
      <Btn w="w-3" label="Chart types"><Chev /></Btn>
      <Sep w="w-1" c={s} />
      <Btn w="w-[17px]" label="Indicators"><G><path d="M14 3c-4-2-4 2-4.500 6L8 20c-.5 2-2 2-3 1M6 9h7M14 13l6 7M20 13l-6 7" /></G></Btn>
      <Btn w="w-[22px]" label="Templates"><GridI /></Btn>
      <Sep w="w-1" c={s} />
      <Btn w="w-[50px]" className="gap-0.5"><Settings size={7} strokeWidth={2} />Preferences</Btn>
      <Sep w="w-1.5" c={s} />
      <Btn w="w-[62px]" className="gap-0.5"><Link2 size={8} strokeWidth={2} className="-rotate-45" />Add Chart Link</Btn>
      <Sep w="w-1.5" c={s} />
      <Btn w="w-4" label="Undo"><Undo2 size={10} strokeWidth={1.6} /></Btn>
      <Btn w="w-5" label="Redo" className="text-[#4a4a4e]"><Redo2 size={10} strokeWidth={1.6} /></Btn>
      <Btn w="w-5" label="Layout"><Square size={11} strokeWidth={1.8} /></Btn>
      <Btn w="w-8">default</Btn>
      <Btn w="w-3" label="Layouts"><Chev /></Btn>
      <Sep w="w-1" c={s} />
    </div>
  );
}

const NQ_PRICES = ["25500.00", "25400.00", "25300.00", "25200.00", "25100.00", "25000.00", "24900.00", "24800.00", "24700.00", "24600.00", "24500.00", "24400.00", "24300.00", "24200.00", "24100.00", "24000.00"];
const COVERED = ["25400.00", "24500.00"];

function NqChart() {
  return (
    <div className="flex min-w-0 flex-1 flex-col pl-0.5">
      <div className="relative flex">
        <svg viewBox="0 0 1290 1041" preserveAspectRatio="none" className="block h-[347px] min-w-0 flex-1" role="img" aria-label="MNQZ25 15 minute chart">
          <path d="M0 75H1290" stroke="#b3ae30" strokeWidth="5" />
          <path d="M0 393H1290" stroke="#4f7479" strokeWidth="3" strokeDasharray="3 4" />
          <path d="M0 576H1290M0 687H1290" stroke="#b32c4c" strokeWidth="4" />
          <path d="M0 780H1290M171 0V1041" stroke="#55555b" strokeWidth="3" strokeDasharray="9 8" />
          <g transform="translate(294 -9)"><Candles data={NQ} w={5} wick={2.5} /></g>
          <path d="M168 761v36M150 779h36" stroke="#fff" strokeWidth="5" />
        </svg>
        <div className="flex w-[35px] shrink-0 flex-col justify-between pr-[3px] pb-[3px] text-right text-[6px] leading-[8px] text-[#a9a9ae]">
          {NQ_PRICES.map((p) => <span key={p} className="h-2">{COVERED.includes(p) ? "" : p}</span>)}
        </div>
        <div className="absolute top-1 left-1 text-[6px] text-[#cfcfd4]">
          <div className="flex h-3 items-center whitespace-nowrap">
            <span className="w-[54px] text-[7px]">MNQZ25 · 15</span>
            <span className="mr-2.5 size-[5px] rounded-full bg-[#1fa884]" />
            <span className="text-[#38a9b0]">
              <span className="text-[#cfcfd4]">O</span>25708.00 <span className="text-[#cfcfd4]">H</span>25720.00 <span className="text-[#cfcfd4]">L</span>25705.25 <span className="text-[#cfcfd4]">C</span>25715.25 +8.00 (+0.03%)
            </span>
          </div>
          <button type="button" className="flex h-3 items-center gap-px bg-[#29292e] pr-1">_<Chev />1</button>
        </div>
        <div className={`absolute top-[5px] right-[38px] w-[45px] bg-[#1b1b1f] py-px text-center text-[5px] leading-[7px] font-bold text-white ${roboto}`}>Position Bracket<br />Enabled</div>
        <div className="absolute inset-y-0 right-0 w-[33px] text-[6px] leading-[9px] font-semibold">
          <span className="absolute top-[20px] right-0 w-full bg-[#f0ea3c] pr-[3px] text-right text-[#3b3a10]">25409.00</span>
          <span className="absolute top-[127px] right-0 w-full bg-[#21b4bd] pr-[3px] text-right text-[#0f4a50]">24935.00</span>
          <span className="absolute top-[188px] right-0 w-full bg-[#d8264b] pr-[3px] text-right text-white">24661.00</span>
          <span className="absolute top-[225px] right-0 w-full bg-[#d8264b] pr-[3px] text-right text-white">24493.50</span>
          <span className="absolute top-[256px] right-0 w-full bg-[#363945] pr-[3px] text-right text-white">24355.50</span>
          <span className="absolute top-[256px] right-[34px] text-white"><CirclePlus size={9} strokeWidth={2} /></span>
        </div>
        <span className="absolute bottom-[7px] left-[7px] flex size-[14px] items-center justify-center rounded-full bg-black text-white"><TvMark s="w-[9px]" /></span>
        <span className="absolute bottom-px left-[112px] flex size-[11px] items-center justify-center rounded-full border border-[#d8d8d8] text-[#e6b53a]"><G s="size-[7px]" w={1}><path d="M14 1L4 14h7l-2 9L20 9h-7z" fill="currentColor" /></G></span>
        <div className="absolute -bottom-px left-[147px] flex h-4 items-center rounded-sm bg-[#26262a] text-[#cacad0] shadow">
          <Btn w="w-3.5" label="Move" className="text-[#55555a]"><Drag /></Btn>
          {[<Trend />, <HRay />, <Position />, <Position />, <Brush />, <Zig />, <RectTool />, <TextRange />, <Fib />].map((n, i) => (
            <Btn key={i} w="w-[19px]" label="Drawing tool">{n}</Btn>
          ))}
        </div>
      </div>
      <div className="flex h-[15px] items-center pl-[30px] text-center text-[6px] text-[#b4b4ba]">
        <span className="w-[54px] shrink-0 bg-[#343743] leading-[9px] font-semibold whitespace-nowrap text-white">13 Nov '25&nbsp; 01:30</span>
        <span className="w-[22px] shrink-0">06:00</span>
        <span className="w-[15px] shrink-0" />
        {["12:00", "18:00", "14", "06:00", "12:00", "16"].map((t, i) => <span key={i} className="w-12 shrink-0">{t}</span>)}
        <span className="flex flex-1 justify-end pr-3"><Hexagon size={8} strokeWidth={2} /></span>
      </div>
      <div className="flex h-5 items-center pr-px pl-1 text-[7px] font-semibold whitespace-nowrap text-[#d4d4d8]">
        {["1yr", "3m", "1m", "5d", "3d", "1d"].map((t) => <Btn key={t} w="w-[15px]">{t}</Btn>)}
        <Sep w="w-1" c="bg-[#a0a0a4]" />
        <Btn w="w-[18px]" label="Go to date"><CalendarSync size={10} strokeWidth={1.6} /></Btn>
        <div className="flex-1" />
        <span>09:54:32 (UTC-5)</span>
        <Btn w="w-6">ETH</Btn>
        <Sep w="w-1" c="bg-[#a0a0a4]" />
        <Btn w="w-3">%</Btn>
        <Btn w="w-4">log</Btn>
        <Btn w="w-5" className="text-white">auto</Btn>
      </div>
    </div>
  );
}

function Field({ id, label, className = "", children }: { id: string; label: string; className?: string; children: React.ReactNode }) {
  return (
    <div className={`relative flex h-5 min-w-0 items-center rounded-xs border border-[#515156] px-1.5 ${className}`}>
      <label htmlFor={id} className="absolute -top-[5px] left-1 bg-[#29292e] px-0.5 text-[6px] leading-2 whitespace-nowrap text-[#b4b4b8]">{label}</label>
      {children}
    </div>
  );
}
const Caret = () => <span className="shrink-0 text-[5px] text-white">▼</span>;
const Gear = () => <button type="button" aria-label="Settings" className="shrink-0"><Settings size={8} strokeWidth={4} /></button>;

function OrderPanel() {
  const round = "flex size-[10px] items-center justify-center rounded-full text-[6px] leading-none font-bold";
  return (
    <div className={`h-[287px] overflow-hidden bg-[#29292e] pl-px text-white ${roboto}`}>
      <div className="flex h-3 items-center gap-1 pl-1">
        <span className="size-[7px] shrink-0 rounded-full bg-[#1f86e0]" />
        <span className="flex h-[7px] w-[7px] shrink-0 items-center justify-center border border-[#77777c] text-[5px]">H</span>
        <span className="flex-1 text-[7px] font-bold">Order</span>
        <AddBox />
      </div>
      <div className="ml-px h-0.5 w-[46px] bg-white" />
      <div className="mt-[6px] flex items-center gap-1 pr-px">
        <Field id="contract" label="Contract" className="flex-1">
          <span className="mr-0.5 size-[3px] shrink-0 rounded-full bg-[#3fae4a]" />
          <select id="contract" className="min-w-0 flex-1 appearance-none bg-transparent text-[8px] leading-none font-bold"><option>MNQZ25</option></select>
          <Caret />
        </Field>
        <Gear />
      </div>
      <Field id="otype" label="Order Type" className="mt-[6px]">
        <select id="otype" className="min-w-0 flex-1 appearance-none bg-transparent text-[8px] leading-none font-bold"><option>Market</option></select>
        <Caret />
      </Field>
      <Field id="qty" label="# of Contracts" className="mt-[6px]">
        <input id="qty" defaultValue="1" className="w-full bg-transparent text-[8px] leading-none outline-none" />
      </Field>
      <div className="mt-[3px] grid h-5 grid-cols-3 rounded-xs border border-[#3d3d42] text-center text-[5px] leading-[8px]">
        <span className="border-r border-[#3d3d42] pt-px">Bid:<br />24,935.00</span>
        <span className="pt-px font-bold">24,935.00<br />0.50</span>
        <span className="pt-px">Ask:<br />24,935.50</span>
      </div>
      <button type="button" aria-haspopup="listbox" className="mt-[6px] flex h-[17px] w-full items-center gap-0.5 rounded-sm border border-[#3a3c42] bg-[#1b1c20] px-1.5 text-[6px] font-bold whitespace-nowrap">
        <span className="text-[#2f8fd8]">$150K PRACTICE</span><span>| ***…</span><span className="ml-auto"><Caret /></span>
      </button>
      <div className="mt-[7px] h-2 text-center text-[5px] leading-2 font-bold">No Active Position</div>
      <div className="mt-px flex h-[22px] items-center justify-between px-0.5">
        <button type="button" className={`${round} bg-[#55555a] text-[#29292e]`}>-</button>
        <div className="flex flex-col items-center gap-px">
          <div className="flex gap-[3px]">
            <button type="button" className={`${round} bg-[#b0b0b4]`}>1</button>
            <button type="button" className={`${round} bg-[#66666a]`}>3</button>
            <button type="button" className={`${round} bg-[#55555a]`}>5</button>
          </div>
          <div className="flex gap-[3px]">
            <button type="button" className={`${round} bg-[#55555a]`}>10</button>
            <button type="button" className={`${round} bg-[#55555a]`}>15</button>
          </div>
        </div>
        <button type="button" className={`${round} bg-[#55555a]`}>+</button>
      </div>
      <div className="mt-[8px] flex items-center gap-[6px] pr-0.5">
        <Field id="bracket" label="Position Bracket" className="h-[18px] flex-1">
          <select id="bracket" className="min-w-0 flex-1 appearance-none bg-transparent text-[6px] leading-none text-[#a4a4a8]"><option>Enabled</option></select>
          <Caret />
        </Field>
        <Gear />
      </div>
      <div className="mt-[8px] flex flex-col gap-0.5 text-[6px] font-bold">
        <button type="button" className="h-[13px] rounded-xs bg-[#43a648]">BUY +1 @ MARKET</button>
        <button type="button" className="h-[13px] rounded-xs bg-[#bd2f3c]">SELL -1 @ MARKET</button>
        <div className="grid grid-cols-2 gap-0.5 text-[5px]">
          <button type="button" className="h-[13px] rounded-xs bg-[#4a4a4e]">JOIN BID</button>
          <button type="button" className="h-[13px] rounded-xs bg-[#4a4a4e]">JOIN ASK</button>
        </div>
        <button type="button" disabled className="h-3 rounded-xs bg-[#3b3b3f] text-[5px] text-[#77777b]">CLOSE POSITION</button>
        <button type="button" disabled className="h-[13px] rounded-xs bg-[#3b3b3f] text-[5px] text-[#77777b]">REVERSE POSITION</button>
      </div>
    </div>
  );
}

function TimeAndSales() {
  const rows = ["24,933.75", "24,933.75", "24,933.50", "24,933.50", "24,933.50", "24,933.50", "24,933.50"];
  return (
    <div className={`mt-1 h-[124px] overflow-hidden bg-[#29292e] pl-px text-white ${roboto}`}>
      <div className="flex h-[14px] items-center gap-1 pl-[3px] text-[7px] font-bold">
        <span className="flex-1 whitespace-nowrap">Time and Sales</span><span className="pr-1 font-normal">…</span><AddBox />
      </div>
      <div className="ml-px h-0.5 w-[52px] bg-white" />
      <div className="mt-[5px] flex items-center gap-1 pr-px">
        <Field id="ts-contract" label="Contract" className="flex-1">
          <select id="ts-contract" className="min-w-0 flex-1 appearance-none bg-transparent text-[8px] leading-none font-bold"><option>M…</option></select>
          <Caret />
        </Field>
        <Field id="ts-size" label="Size F…" className="w-[25px]">
          <input id="ts-size" defaultValue="1" className="w-full bg-transparent text-[8px] leading-none outline-none" />
        </Field>
        <Gear />
      </div>
      <table className="mt-1 w-full table-fixed text-left text-[6px] leading-[8px]">
        <thead>
          <tr className="border-b border-[#3d3d42] text-[#9a9a9e]">
            <th className="w-[40px] py-px font-normal">Trade Time</th>
            <th className="w-[31px] font-normal">Price ●</th>
            <th className="font-normal">Size</th>
          </tr>
        </thead>
        <tbody>
          {rows.map((p, i) => (
            <tr key={i} className="border-b border-[#36363b]">
              <td className="text-[#a0a0a4]">09:54:33.816</td>
              <td className="text-[#c02b40]">{p}</td>
              <td className="font-bold">1</td>
            </tr>
          ))}
        </tbody>
      </table>
    </div>
  );
}

const BOTTOM_TABS: [string, string][] = [["Accounts", "w-[38px]"], ["Positions", "w-[41px]"], ["Orders", "w-[32px]"], ["Trades", "w-[33px]"], ["Quotes", "w-[32px]"], ["The Tilt™", "w-[38px]"]];
const COLS: [string, string][] = [["Time", "w-[9%]"], ["Symbol", "w-[16%]"], ["Position", "w-[7%]"], ["Entry Price", "w-[10%]"], ["Risk", "w-[17%]"], ["To Make", "w-[14%]"], ["P&L", "w-[12%]"], ["Close", "w-[15%]"]];

function BottomPanel() {
  return (
    <div className={`mt-[3px] bg-[#29292e] text-white ${roboto}`}>
      <div className="flex h-4 items-center pr-px text-center text-[7px] text-[#56565b]">
        {BOTTOM_TABS.map(([t, w]) => (
          <button key={t} type="button" className={`h-full shrink-0 whitespace-nowrap ${w} ${t === "Positions" ? "border-b-2 border-white font-bold text-white" : ""}`}>{t}</button>
        ))}
        <span className="flex-1" />
        <AddBox />
      </div>
      <table className="w-full table-fixed border-t border-[#3b3b40] bg-[#2d2d32] text-[6px] leading-3">
        <thead><tr>{COLS.map(([t, w]) => <th key={t} className={`font-bold ${w} ${t === "Time" ? "pl-1.5 text-left" : ""}`}>{t}</th>)}</tr></thead>
      </table>
      <div className="flex h-3 items-center bg-[#1b1c20] text-[5px] text-[#a4a4a8]">
        <span className="w-1/4">Version 1.22.24</span>
        <span className="w-1/2 text-center">Licensed to Topstep &amp; powered by ProjectX. Copyright 2024-2025</span>
      </div>
    </div>
  );
}

function RightWindow() {
  return (
    <section className="flex min-w-0 flex-col overflow-hidden border-l-2 border-[#2a2a2b] bg-[#1b1b1f]">
      <RightTabs />
      <AddressBar extra url="https://topstepx.com/trade" />
      <div className="flex flex-1">
        <aside className="mr-0.5 flex w-8 shrink-0 flex-col items-center bg-[#26262b] pt-[5px] text-white">
          <span className={`text-[5px] leading-[8px] font-black ${roboto}`}>TOPSTEP</span>
          <span className="mt-px flex h-[21px] w-[21px] items-center justify-center bg-white text-black">
            <svg viewBox="0 0 20 24" className="h-[17px] w-[13px]" aria-hidden="true"><path d="M1 1h7v3H7l3 6 3-6h-1V1h7v3h-2l-4 8 4 8h2v3h-7v-3h1l-3-6-3 6h1v3H1v-3h2l4-8-4-8H1z" fill="currentColor" /></svg>
          </span>
          <button type="button" aria-label="Trade" className="mt-[6px] flex h-[22px] items-center"><MultiCandle /></button>
          <button type="button" aria-label="Leaderboard" className="flex h-[23px] items-center text-[#66666b]"><People /></button>
          <button type="button" aria-label="Stats" className="flex h-[23px] items-center text-[#66666b]"><Sparks /></button>
          <button type="button" aria-label="Settings" className="flex h-[26px] items-center text-[#66666b]"><Settings size={16} strokeWidth={1.3} /></button>
          <button type="button" className={`mt-1 flex h-[20px] w-[18px] flex-col overflow-hidden rounded-sm border border-[#d12020] bg-[#c31d22] text-center font-bold ${roboto}`}>
            <span className="h-[13px] rounded-b-sm bg-[#b8ee2c] text-[8px] leading-[13px] text-[#143a14]">TV</span>
            <span className="text-[5px] leading-[5px] text-[#5a0a0a]">LIVE</span>
          </button>
          <button type="button" aria-label="Help" className="mt-[8px] flex h-[13px] w-[13px] items-center justify-center rounded-xs bg-[#66666b] text-[10px] leading-none font-bold text-[#26262b]">?</button>
          <div className="flex-1" />
          <button type="button" aria-label="Log out" className="mb-[5px]"><LogOut size={14} strokeWidth={1.6} /></button>
        </aside>
        <div className="flex min-w-0 flex-1 flex-col">
          <AppHeader />
          <div className="mt-[3px] flex min-w-0">
            <div className="min-w-0 flex-1 bg-[#29292e]">
              <div className={`flex h-[15px] items-center justify-between pr-px pl-1 text-white ${roboto}`}>
                <span className="h-full w-[24px] border-b-2 border-white pl-px text-[7px] leading-[13px] font-semibold">Chart</span>
                <AddBox />
              </div>
              <NqToolbar />
              <div className="flex">
                <div className="flex w-[27px] shrink-0 flex-col items-center pt-[6px] text-[#c4c4ca]">
                  <ToolColumn
                    item="h-[18px]" sep="h-[7px]" line="bg-[#c4c4ca]"
                    items={[<span className="text-[#b0622a]"><Cross /></span>, <HRay />, <Fib />, <Pattern />, <TextRange />, <Brush />, <Type {...lucide} />, <Smile {...lucide} />, null,
                      <Ruler {...lucide} />, <ZoomIn {...lucide} />, null, <MagnetI />, <PencilLock />, <Lock size={11} strokeWidth={1.8} />, <EyePen />, null, <Trash2 {...lucide} />]}
                  />
                  <div className="flex-1" />
                  <button type="button" aria-label="Favorites" className="mb-1 flex size-[15px] items-center justify-center rounded-xs bg-[#e0a02c] text-[#5c3c08]"><Star size={10} strokeWidth={1.8} /></button>
                  <button type="button" aria-label="Object tree" className="mb-3 flex"><LayersI /></button>
                </div>
                <NqChart />
              </div>
            </div>
            <div className="ml-2 w-[85px] shrink-0">
              <OrderPanel />
              <TimeAndSales />
            </div>
          </div>
          <BottomPanel />
        </div>
      </div>
    </section>
  );
}

/* ---------- taskbar ---------- */
function Taskbar() {
  return (
    <footer className="flex h-[21px] items-center bg-[#101012] text-white">
      <Btn w="w-6" label="Start"><svg viewBox="0 0 20 20" className="size-[9px]" fill="white"><path d="M0 3l8-1v7H0zM9 2l11-2v9H9zM0 10h8v8l-8-1zM9 10h11v10L9 18z" /></svg></Btn>
      <label className="flex h-full w-[145px] shrink-0 items-center gap-1 bg-[#38383a] pl-1.5">
        <Search size={10} strokeWidth={1.6} className="-scale-x-100" />
        <input aria-label="Search" className="min-w-0 flex-1 bg-transparent text-[7px] outline-none placeholder:text-[#dcdcdc]" placeholder="Type here to search" />
        <svg viewBox="0 0 96 42" className="mr-1 h-[14px] w-8" aria-hidden="true">
          <path d="M38 2c2 12 5 15 17 19-12 4-15 7-17 19-2-12-5-15-17-19 12-4 15-7 17-19z" fill="#f6c432" />
          <path d="M72 16c1 7 3 9 10 11-7 2-9 4-10 11-1-7-3-9-10-11 7-2 9-4 10-11z" fill="#f6b03a" />
          <circle cx="8" cy="31" r="6" fill="#2f86d8" /><circle cx="66" cy="8" r="4" fill="#4a9be8" /><circle cx="88" cy="38" r="3" fill="#e8c04a" />
        </svg>
      </label>
      <Btn w="w-[26px]" label="Task view"><G s="size-[11px]" w={2}><path d="M2 4h20M2 20h20M4 8h11v8H4zM19 9v6" /></G></Btn>
      <Btn w="w-[25px]" label="Copilot" className="bg-[#a8581f]"><Copilot /></Btn>
      <Btn w="w-[25px]" label="Edge" className="border-b border-[#7fd6d0] bg-[#2c2f33]"><EdgeI /></Btn>
      <Btn w="w-[25px]" label="Files"><svg viewBox="0 0 24 22" className="w-[11px]"><path d="M1 2h8l2 3h12v15H1z" fill="#e0a83a" /><path d="M1 8h22v12H1z" fill="#f7d774" /><path d="M6 13h12v7H6z" fill="#4a9be0" /></svg></Btn>
      <Btn w="w-[25px]" label="Store"><svg viewBox="0 0 24 24" className="w-3"><path d="M8 6V2h8v4" fill="none" stroke="#5aa8e0" strokeWidth="2" /><rect x="1" y="5" width="22" height="18" rx="3" fill="#f2f2f2" /><path d="M7 9h4v4H7zM13 9h4v4h-4zM7 15h4v4H7zM13 15h4v4h-4z" fill="#555" /></svg></Btn>
      <Btn w="w-[25px]" label="Outlook"><svg viewBox="0 0 24 24" className="w-[13px]"><path d="M6 7l9-6 8 6v14H6z" fill="#4aa8ec" /><path d="M8 12l15-5v15H8z" fill="#1c6fc4" /><rect x="0" y="8" width="13" height="13" rx="2" fill="#0f5cb0" /><circle cx="6.500" cy="14.500" r="3" fill="none" stroke="#fff" strokeWidth="2" /></svg></Btn>
      <Btn w="w-[25px]" label="Discord"><span className="flex h-full w-5 items-center justify-center border-b border-[#7fd6d0]"><svg viewBox="0 0 24 24" className="w-[13px]"><circle cx="12" cy="12" r="11" fill="#5d62d8" /><path d="M5 9c4-3 10-3 14 0l1 7-4 1-1-1H9l-1 1-4-1z" fill="#fff" /><circle cx="18" cy="18" r="6" fill="#d8485a" /><path d="M18 15v6M15 18h6" stroke="#fff" strokeWidth="1.500" /></svg></span></Btn>
      <Btn w="w-[25px]" label="OBS"><span className="flex h-full w-5 items-center justify-center border-b border-[#7fd6d0]"><svg viewBox="0 0 24 24" className="w-[13px]"><circle cx="12" cy="12" r="10" fill="#1c1c1f" stroke="#cfcfcf" strokeWidth="1.500" /><path d="M12 4a5 5 0 013 8M5 15a5 5 0 017-3M13 19a5 5 0 01-1-7" stroke="#cfcfcf" strokeWidth="1.500" fill="none" /><circle cx="17" cy="17" r="6" fill="#d81f2c" /></svg></span></Btn>
      <div className="flex-1" />
      <button type="button" className="flex items-center gap-1 text-[7px] whitespace-nowrap">
        <svg viewBox="0 0 24 20" className="w-3"><path d="M0 6l6-4 5 5 6-5 7 6v11H14l-6-6z" fill="#e0452a" /><path d="M2 9l8 6 6-7 6 8" stroke="#7a1c10" strokeWidth="2" fill="none" /></svg>
        AMZN <span className="text-[#d8455a]">-1.23%</span>
      </button>
      <div className="ml-2 flex h-full items-center">
        {[<ChevronUp size={9} />, <Bookmark size={8} />, <Mic size={9} fill="currentColor" />, <CalendarDays size={9} className="text-[#e8b48a]" />, <Wifi size={8} className="-rotate-45" />, <Volume2 size={9} />].map((n, i) => (
          <Btn key={i} w="w-3" label="Tray item">{n}</Btn>
        ))}
      </div>
      <span className="mr-1 w-8 text-right text-[6px] leading-[9px]"><span className="block text-center">9:54 AM</span>11/14/2025</span>
      <Btn w="w-3" label="Notifications"><svg viewBox="0 0 24 24" className="w-[11px]"><path d="M1 3h22v15H11l-5 5v-5H1z" fill="#eee" /><path d="M5 8h14M5 13h14" stroke="#222" strokeWidth="2" /></svg></Btn>
    </footer>
  );
}

export default function App() {
  return (
    <div className="flex min-h-screen flex-col bg-black pt-[109px] [font-family:'Open_Sans','Noto_Sans',sans-serif] [&_svg]:shrink-0">
      <main className="grid grid-cols-[657fr_623fr] bg-[linear-gradient(90deg,#5d8f92_0%,#7a9a8e_8%,#a8875c_18%,#b88b58_50%)]">
        <div className="grid min-w-0 bg-no-repeat pl-1 [background-image:linear-gradient(180deg,#b9a38f_0%,#c7a183_20%,#2b2318_24%,#2a2a1c_45%,#c4b49e_55%,#2f4a30_70%,#cfd8c8_78%,#5d9a9c_92%)] [background-size:4px_100%]">
          <LeftWindow />
        </div>
        <RightWindow />
      </main>
      <Taskbar />
    </div>
  );
}
